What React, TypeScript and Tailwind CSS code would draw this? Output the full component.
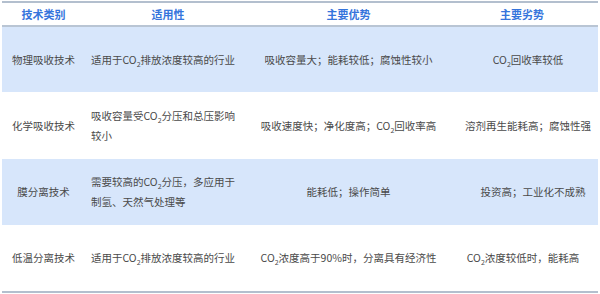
import React from "react";

const CO2 = () => (
  <span className="whitespace-nowrap">
    CO<span className="inline-block text-[7px] leading-none translate-y-[3px]">2</span>
  </span>
);

type Row = {
  a: React.ReactNode;
  b: React.ReactNode;
  c: React.ReactNode;
  d: React.ReactNode;
  blue: boolean;
  h: string;
  dpad?: string;
};

const rows: Row[] = [
  {
    a: "物理吸收技术",
    b: <div>适用于<CO2 />排放浓度较高的行业</div>,
    c: "吸收容量大；能耗较低；腐蚀性较小",
    d: <><CO2 />回收率较低</>,
    blue: true,
    h: "h-[65px]",
    dpad: "pl-[12px]",
  },
  {
    a: "化学吸收技术",
    b: (
      <>
        <div>吸收容量受<CO2 />分压和总压影响</div>
        <div>较小</div>
      </>
    ),
    c: <>吸收速度快；净化度高；<CO2 />回收率高</>,
    d: "溶剂再生能耗高；腐蚀性强",
    blue: false,
    h: "h-[67px]",
    dpad: "pl-[12px]",
  },
  {
    a: "膜分离技术",
    b: (
      <>
        <div>需要较高的<CO2 />分压，多应用于</div>
        <div>制氢、天然气处理等</div>
      </>
    ),
    c: "能耗低；操作简单",
    d: "投资高；工业化不成熟",
    blue: true,
    h: "h-[66px]",
    dpad: "pl-[22px]",
  },
  {
    a: "低温分离技术",
    b: <div>适用于<CO2 />排放浓度较高的行业</div>,
    c: <><CO2 />浓度高于90%时，分离具有经济性</>,
    d: <><CO2 />浓度较低时，能耗高</>,
    blue: false,
    h: "h-[66px]",
    dpad: "pl-[2px]",
  },
];

export default function App() {
  return (
    <div
      className="w-[600px] h-[294px] bg-white pt-px px-[2px] text-[10.5px] text-[#4a4a4a]"
      style={{ fontFamily: '"Noto Sans CJK SC", "Noto Sans", sans-serif' }}
    >
      <div className="border-t-2 border-b-2 border-[#b3bfce]">
        <div className="grid grid-cols-[83px_166px_195px_152px] h-[24px] items-center border-b-2 border-[#b9c5d4] font-bold text-[#3574dc] text-[11px]">
          <div className="text-center">技术类别</div>
          <div className="text-center">适用性</div>
          <div className="text-center">主要优势</div>
          <div className="text-center">主要劣势</div>
        </div>
        {rows.map((r, i) => (
          <div
            key={i}
            className={`grid grid-cols-[83px_166px_195px_152px] items-center ${r.h} ${
              r.blue ? "bg-[#d7e6fb]" : "bg-white"
            }`}
          >
            <div className="text-center whitespace-nowrap">{r.a}</div>
            <div className="pl-[6px] pr-[8px] leading-[20px] whitespace-nowrap">{r.b}</div>
            <div className="text-center whitespace-nowrap">{r.c}</div>
            <div className={`text-center whitespace-nowrap ${r.dpad ?? ""}`}>{r.d}</div>
          </div>
        ))}
      </div>
    </div>
  );
}
